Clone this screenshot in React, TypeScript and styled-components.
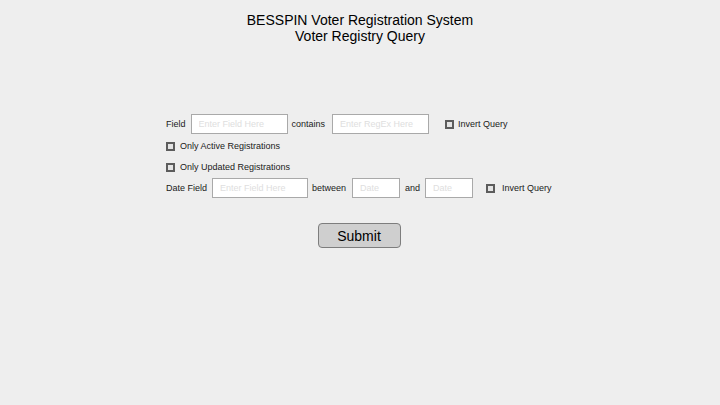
import React from "react";
import styled, { createGlobalStyle } from "styled-components";

const Global = createGlobalStyle`
  html, body { margin: 0; padding: 0; background: #eeeeee; }
  body { font-family: "Liberation Sans", Arial, sans-serif; color: #111; }
`;

const Page = styled.div`
  width: 720px;
  height: 405px;
  background: #eeeeee;
  box-sizing: border-box;
  padding-top: 12px;
  display: flex;
  flex-direction: column;
`;

const Header = styled.header`
  display: flex;
  flex-direction: column;
  align-items: center;
  font-size: 14px;
  line-height: 16px;
  color: #000;
`;

const Form = styled.form`
  margin-top: 70px;
  display: flex;
  flex-direction: column;
`;

const Fields = styled.div`
  padding-left: 166px;
  display: flex;
  flex-direction: column;
  gap: 1px;
`;

const Row = styled.div<{ $mt?: number }>`
  display: flex;
  align-items: center;
  height: 20px;
  margin-top: ${(p) => p.$mt ?? 0}px;
`;

const Label = styled.span<{ $ml?: number }>`
  font-size: 9px;
  line-height: 12px;
  color: #1a1a1a;
  margin-left: ${(p) => p.$ml ?? 0}px;
  white-space: nowrap;
`;

const Input = styled.input<{ $w: number; $ml?: number }>`
  box-sizing: border-box;
  width: ${(p) => p.$w}px;
  height: 20px;
  margin: 0 0 0 ${(p) => p.$ml ?? 0}px;
  padding: 0 0 0 7px;
  border: 1px solid #a9a9a9;
  border-radius: 0;
  background: #fff;
  font-family: "Liberation Sans", Arial, sans-serif;
  font-size: 9px;
  outline: none;
  &::placeholder { color: #dedede; }
`;

const Box = styled.span<{ $ml?: number }>`
  display: inline-block;
  box-sizing: border-box;
  width: 9px;
  height: 9px;
  border: 2px solid #5c5c5c;
  background: #e4e4e4;
  margin-left: ${(p) => p.$ml ?? 0}px;
  flex: none;
`;

const Actions = styled.div`
  display: flex;
  justify-content: center;
  margin-top: 25px;
`;

const Button = styled.button`
  box-sizing: border-box;
  width: 83px;
  height: 25px;
  border: 1px solid #7d7d7d;
  border-radius: 4px;
  background: #cfcfcf;
  font-family: "Liberation Sans", Arial, sans-serif;
  font-size: 14px;
  color: #000;
  padding: 0;
  transform: translateX(-1px);
`;

export default function App() {
  return (
    <>
      <Global />
      <Page>
        <Header>
          <div>BESSPIN Voter Registration System</div>
          <div>Voter Registry Query</div>
        </Header>
        <Form onSubmit={(e) => e.preventDefault()}>
          <Fields>
            <Row>
              <Label>Field</Label>
              <Input $w={97} $ml={5} placeholder="Enter Field Here" />
              <Label $ml={4}>contains</Label>
              <Input $w={97} $ml={7} placeholder="Enter RegEx Here" />
              <Box $ml={16} />
              <Label $ml={4}>Invert Query</Label>
            </Row>
            <Row $mt={1}>
              <Box />
              <Label $ml={5}>Only Active Registrations</Label>
            </Row>
            <Row>
              <Box />
              <Label $ml={5}>Only Updated Registrations</Label>
            </Row>
            <Row>
              <Label>Date Field</Label>
              <Input $w={96} $ml={5} placeholder="Enter Field Here" />
              <Label $ml={4}>between</Label>
              <Input $w={48} $ml={6} placeholder="Date" />
              <Label $ml={5}>and</Label>
              <Input $w={48} $ml={5} placeholder="Date" />
              <Box $ml={13} />
              <Label $ml={7}>Invert Query</Label>
            </Row>
          </Fields>
          <Actions>
            <Button type="submit">Submit</Button>
          </Actions>
        </Form>
      </Page>
    </>
  );
}
